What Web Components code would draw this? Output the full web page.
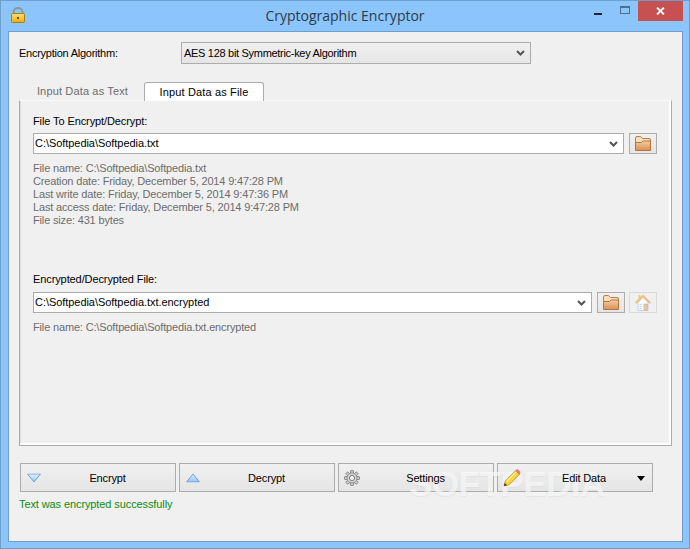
<!DOCTYPE html>
<html>
<head>
<meta charset="utf-8">
<title>Cryptographic Encryptor</title>
<style>
    html, body { margin: 0; padding: 0; background: #8bc5fb; }
    body { font: 11px "Liberation Sans", Arial, sans-serif; width: 690px; height: 549px; overflow: hidden; }
</style>
</head>
<body>
<app-window></app-window>
<script>
const gearTeeth = [0, 45, 90, 135, 180, 225, 270, 315].map(a => `<rect x="6.500" y=".5" width="3" height="3.500" rx=".5" fill="#c9c9c9" stroke="#7f7f7f" stroke-width=".8" transform="rotate(${a} 8 8)"/>`).join("");

const ICONS = {
    lock: `<svg width="14" height="16" viewBox="0 0 14 16"><path d="M2.500 7V5a4.500 4 0 0 1 9 0v2" fill="none" stroke="#8f9598" stroke-width="2"/><rect x=".5" y="6.500" width="13" height="9" rx="1" fill="url(#lk)" stroke="#a9800f"/><rect x="6" y="10" width="2" height="2" fill="#6b4c06"/><defs><linearGradient id="lk" x1="0" y1="0" x2="0" y2="1"><stop offset="0" stop-color="#fde06c"/><stop offset="1" stop-color="#f0ab12"/></linearGradient></defs></svg>`,
    folder: `<svg width="16" height="15" viewBox="0 0 16 15"><path d="M.5 14V2A1.500 1.500 0 0 1 2 .5h3.500l2 2H14A1.500 1.500 0 0 1 15.500 4v10z" fill="#f8dcbc" stroke="#bd7c46"/><path d="M.5 6.500h6L8 5h7.500v9.500H.5z" fill="url(#fg)" stroke="#b9743e"/><defs><linearGradient id="fg" x1="0" y1="0" x2="0" y2="1"><stop offset="0" stop-color="#f4cda0"/><stop offset="1" stop-color="#d68f57"/></linearGradient></defs></svg>`,
    home: `<svg width="16" height="17" viewBox="0 0 16 17"><path d="M3 8.500l5-5 5 5v8H3z" fill="#fbfcfe" stroke="#bcd4ee"/><rect x="3.500" y="1" width="2" height="4" fill="#f1c58d"/><path d="M.8 9 8 1.800 15.200 9" fill="none" stroke="#f0bd7e" stroke-width="2"/><rect x="9" y="10" width="3.500" height="6.500" fill="#e5c9ac" stroke="#cfa983" stroke-width=".6"/><path d="M4.500 10.500h2M4.500 12.500h2M4.500 14.500h2" stroke="#c3d5ea"/></svg>`,
    down: `<svg width="14" height="9" viewBox="0 0 14 9"><path d="M.5.500h13L7 8.500z" fill="url(#dn)" stroke="#6aa2dc"/><defs><linearGradient id="dn" x1="0" y1="0" x2="0" y2="1"><stop offset="0" stop-color="#e8f2fd"/><stop offset="1" stop-color="#93c3f3"/></linearGradient></defs></svg>`,
    up: `<svg width="14" height="9" viewBox="0 0 14 9"><path d="M.5 8.500h13L7 .5z" fill="url(#upg)" stroke="#6aa2dc"/><defs><linearGradient id="upg" x1="0" y1="0" x2="0" y2="1"><stop offset="0" stop-color="#e8f2fd"/><stop offset="1" stop-color="#93c3f3"/></linearGradient></defs></svg>`,
    gear: `<svg width="16" height="16" viewBox="0 0 16 16">${gearTeeth}<circle cx="8" cy="8" r="5" fill="#d2d2d2" stroke="#8a8a8a" stroke-width=".8"/><circle cx="8" cy="8" r="2.600" fill="#f0f0f0" stroke="#7f7f7f"/></svg>`,
    pencil: `<svg width="18" height="18" viewBox="0 0 18 18"><path d="M1 17l1.300-5L12.800 1.500l3.700 3.700L6 15.700z" fill="#f8d63c" stroke="#b9891c" stroke-width=".8"/><path d="M3.500 12.500 13.500 2.500" stroke="#fdf0a0" stroke-width="1.200"/><path d="M12.800 1.500c1-1 2-1 2.700-.3l1 1c.7.700.7 1.700-.3 3z" fill="#e58080" stroke="#c06060" stroke-width=".6"/><path d="M1 17l.8-3 2.200 2.200z" fill="#3a3020"/></svg>`,
    chevron: `<svg width="9" height="6" viewBox="0 0 9 6"><path d="M1 1l3.500 3.500L8 1" fill="none" stroke="#555" stroke-width="2"/></svg>`
};

class AppWindow extends HTMLElement {
    connectedCallback() {
        this.inner = this.attachShadow({ mode: "open" });
        this.inner.innerHTML = `
            <style>
                :host { display: flex; flex-direction: column; width: 690px; height: 549px; box-sizing: border-box; border: 1px solid #6f9ecb; color: #000; position: relative; }
                .client { flex: 1; margin: 0 6px 6px 7px; background: #f0f0f0; border: 1px solid #6f9ecb; padding: 10px 0 0 10px; display: flex; flex-direction: column; box-sizing: border-box; }
                .algo { display: flex; align-items: center; height: 22px; }
                .algo span { width: 162px; letter-spacing: -.25px; }
                .footer { display: flex; gap: 3px; margin: 17px 0 0 1px; }
                .status { color: #118a11; margin: 5px 0 0 0; height: 14px; line-height: 14px; letter-spacing: -.1px; }
                .mark { position: absolute; z-index: 1; left: 408px; top: 463px; font: bold 35px "Liberation Sans", sans-serif; color: rgba(255,255,255,.6); text-shadow: 0 1px 1px rgba(200,200,200,.3); pointer-events: none; letter-spacing: -.5px; }
            </style>
            <title-bar>Cryptographic Encryptor</title-bar>
            <div class="client">
                <div class="algo"><span>Encryption Algorithm:</span><combo-box width="350" flat>AES 128 bit Symmetric-key Algorithm</combo-box></div>
                <tab-panel></tab-panel>
                <div class="footer">
                    <action-button icon="down" offset="6">Encrypt</action-button>
                    <action-button icon="up" offset="6">Decrypt</action-button>
                    <action-button icon="gear" offset="5">Settings</action-button>
                    <action-button icon="pencil" offset="5" menu>Edit Data</action-button>
                </div>
                <div class="status">Text was encrypted successfully</div>
            </div>
            <div class="mark">SOFTPEDIA</div>
        `;
    }
}

class TitleBar extends HTMLElement {
    connectedCallback() {
        this.inner = this.attachShadow({ mode: "open" });
        this.inner.innerHTML = `
            <style>
                :host { display: flex; align-items: flex-start; height: 30px; flex: none; position: relative; }
                .icon { margin: 6px 0 0 10px; width: 14px; height: 16px; }
                .text { position: absolute; left: 0; right: 0; top: 5px; text-align: center; font: 14px "Open Sans", sans-serif; color: #2c3b4b; line-height: 20px; }
                .ctl { margin-left: auto; display: flex; position: relative; }
                .min { width: 28px; height: 20px; display: flex; align-items: center; justify-content: center; }
                .min i { display: block; width: 8px; height: 2px; background: #1b2733; margin-top: 6px; }
                .max { width: 26px; height: 20px; display: flex; align-items: center; justify-content: center; }
                .max i { display: block; box-sizing: border-box; width: 10px; height: 8px; border: 1px solid #4f6d8c; border-top-width: 2px; margin-top: -3px; }
                .close { width: 45px; height: 20px; background: #c75050; color: #fff; display: flex; align-items: center; justify-content: center; margin-right: 6px; }
            </style>
            <div class="icon">${ICONS.lock}</div>
            <div class="text"><slot></slot></div>
            <div class="ctl">
                <div class="min"><i></i></div>
                <div class="max"><i></i></div>
                <div class="close"><svg width="9" height="8" viewBox="0 0 9 8"><path d="M1 .5l7 7M8 .5l-7 7" stroke="#fff" stroke-width="1.800" fill="none"/></svg></div>
            </div>
        `;
    }
}

class ComboBox extends HTMLElement {
    connectedCallback() {
        this.inner = this.attachShadow({ mode: "open" });
        const flat = this.hasAttribute("flat");
        this.inner.innerHTML = `
            <style>
                :host { display: flex; align-items: center; box-sizing: border-box; flex: none; height: ${flat ? 22 : 21}px; width: ${this.getAttribute("width")}px; border: 1px solid #acacac; padding: 0 5px 0 ${flat ? 2 : 1}px; background: ${flat ? "linear-gradient(#f0f0f0,#e5e5e5)" : "#fff"}; }
                .text { flex: 1; white-space: nowrap; font-size: 11px; letter-spacing: ${flat ? "-.3px" : "-.05px"}; padding-bottom: ${flat ? 0 : 2}px; }
                svg { display: block; }
            </style>
            <div class="text"><slot></slot></div>
            ${ICONS.chevron}
        `;
    }
}

class IconButton extends HTMLElement {
    connectedCallback() {
        this.inner = this.attachShadow({ mode: "open" });
        const off = this.hasAttribute("disabled");
        this.inner.innerHTML = `
            <style>
                :host { display: flex; align-items: center; justify-content: center; box-sizing: border-box; width: 28px; height: 21px; flex: none; border: 1px solid ${off ? "#d9d9d9" : "#acacac"}; background: ${off ? "#f0f0f0" : "linear-gradient(#f0f0f0,#e5e5e5)"}; }
                svg { display: block; }
            </style>
            ${ICONS[this.getAttribute("icon")]}
        `;
    }
}

class ActionButton extends HTMLElement {
    connectedCallback() {
        this.inner = this.attachShadow({ mode: "open" });
        const menu = this.hasAttribute("menu");
        this.inner.innerHTML = `
            <style>
                :host { display: flex; align-items: center; box-sizing: border-box; width: 156px; height: 29px; position: relative; border: 1px solid #acacac; background: linear-gradient(#f0f0f0,#e5e5e5); font-size: 11px; }
                .icon { position: absolute; z-index: 2; left: ${this.getAttribute("offset")}px; top: 50%; transform: translateY(-50%); display: flex; }
                .text { flex: 1; position: relative; z-index: 2; text-align: center; padding-left: ${menu ? 18 : 19}px; letter-spacing: -.15px; }
                .arrow { position: absolute; z-index: 2; right: 7px; top: 12px; width: 0; height: 0; border: 4.500px solid transparent; border-top: 5px solid #000; border-bottom: 0; }
            </style>
            <div class="icon">${ICONS[this.getAttribute("icon")]}</div>
            <div class="text"><slot></slot></div>
            ${menu ? '<div class="arrow"></div>' : ""}
        `;
    }
}

class TabPanel extends HTMLElement {
    connectedCallback() {
        this.inner = this.attachShadow({ mode: "open" });
        this.inner.innerHTML = `
            <style>
                :host { display: flex; flex-direction: column; margin-top: 18px; font-size: 11px; }
                .tabs { display: flex; height: 19px; padding-left: 2px; letter-spacing: .15px; }
                .tab { color: #6d6d6d; width: 123px; text-align: center; line-height: 19px; font-size: 11px; }
                .tab.on { color: #000; width: 120px; height: 19px; box-sizing: border-box; background: #fff; border: 1px solid #acacac; border-bottom: 0; border-radius: 3px 3px 0 0; position: relative; z-index: 1; line-height: 18px; margin-left: 0; }
                .pane { box-sizing: border-box; height: 346px; width: 653px; margin-top: -1px; border: 1px solid #acacac; border-top-color: #fafafa; padding: 13px 13px 0 13px; box-shadow: inset -2px -2px 0 #fff, inset 1px 0 0 #dcdcdc; }
                .row { display: flex; gap: 5px; margin-top: 6px; align-items: center; }
                .row.first { margin-top: 5px; }
                .label { line-height: 14px; height: 14px; letter-spacing: -.1px; }
                .info { color: #6d6d6d; margin-top: 8px; line-height: 13px; letter-spacing: -.16px; }
                .second { margin-top: 45px; }
            </style>
            <div class="tabs">
                <div class="tab">Input Data as Text</div>
                <div class="tab on">Input Data as File</div>
            </div>
            <div class="pane">
                <div class="label">File To Encrypt/Decrypt:</div>
                <div class="row first">
                    <combo-box width="591">C:\\Softpedia\\Softpedia.txt</combo-box>
                    <icon-button icon="folder"></icon-button>
                </div>
                <div class="info">
                    File name: C:\\Softpedia\\Softpedia.txt<br>
                    Creation date: Friday, December 5, 2014 9:47:28 PM<br>
                    Last write date: Friday, December 5, 2014 9:47:36 PM<br>
                    Last access date: Friday, December 5, 2014 9:47:28 PM<br>
                    File size: 431 bytes
                </div>
                <div class="label second">Encrypted/Decrypted File:</div>
                <div class="row">
                    <combo-box width="559">C:\\Softpedia\\Softpedia.txt.encrypted</combo-box>
                    <icon-button icon="folder"></icon-button>
                    <icon-button icon="home" disabled style="margin-left:-1px"></icon-button>
                </div>
                <div class="info">File name: C:\\Softpedia\\Softpedia.txt.encrypted</div>
            </div>
        `;
    }
}

customElements.define("title-bar", TitleBar);
customElements.define("combo-box", ComboBox);
customElements.define("icon-button", IconButton);
customElements.define("action-button", ActionButton);
customElements.define("tab-panel", TabPanel);
customElements.define("app-window", AppWindow);
</script>
</body>
</html>
